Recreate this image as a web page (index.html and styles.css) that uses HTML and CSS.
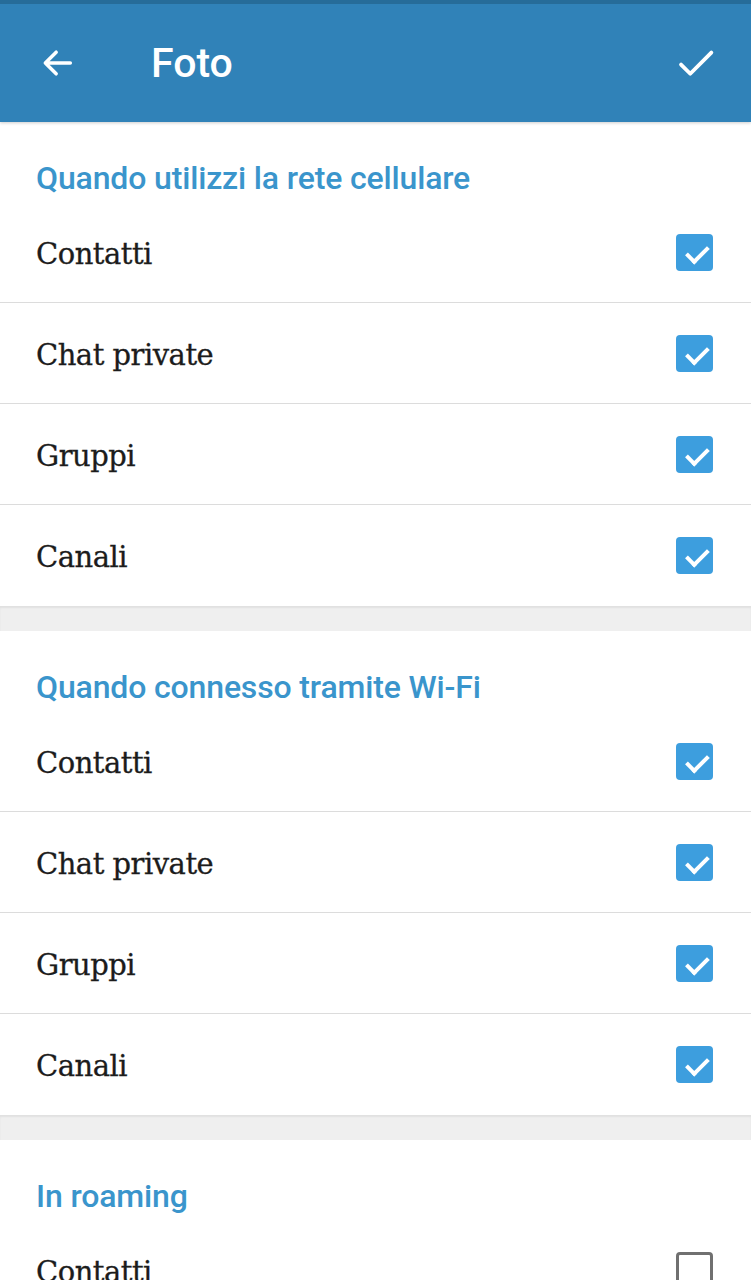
FILE: index.html
```html
<!DOCTYPE html>
<html lang="it">
<head>
  <meta charset="UTF-8" />
  <title>Foto</title>
  <meta name="viewport" content="width=device-width, initial-scale=1" />
  <link rel="stylesheet" href="styles.css">
</head>
<body>
  <header class="bar">
    <svg class="bar-icon" width="40" height="40" viewBox="0 0 24 24"><path d="M20 12H5M11.5 5.5L5 12l6.5 6.5" fill="none" stroke="#fff" stroke-width="2.1" stroke-linecap="round" stroke-linejoin="round"/></svg>
    <h1>Foto</h1>
    <svg class="bar-icon" width="46" height="46" viewBox="0 0 24 24"><path d="M4.2 12.8l4.8 4.8L20 6.6" fill="none" stroke="#fff" stroke-width="2" stroke-linecap="round" stroke-linejoin="round"/></svg>
  </header>

  <section class="group">
    <h2>Quando utilizzi la rete cellulare</h2>
    <div class="row"><span>Contatti</span><i class="box on"></i></div>
    <div class="row"><span>Chat private</span><i class="box on"></i></div>
    <div class="row"><span>Gruppi</span><i class="box on"></i></div>
    <div class="row"><span>Canali</span><i class="box on"></i></div>
  </section>
  <div class="gap"></div>
  <section class="group">
    <h2>Quando connesso tramite Wi-Fi</h2>
    <div class="row"><span>Contatti</span><i class="box on"></i></div>
    <div class="row"><span>Chat private</span><i class="box on"></i></div>
    <div class="row"><span>Gruppi</span><i class="box on"></i></div>
    <div class="row"><span>Canali</span><i class="box on"></i></div>
  </section>
  <div class="gap"></div>
  <section class="group">
    <h2>In roaming</h2>
    <div class="row"><span>Contatti</span><i class="box"></i></div>
  </section>
</body>
</html>
```

FILE: styles.css
```css
body { margin: 0; background: #fff; font-family: Roboto, "Noto Sans", sans-serif; overflow: hidden; }
.bar { height: 118px; background: #3082b8; border-top: 4px solid #266c99; display: flex; align-items: center; padding: 0 32px 0 37px; box-shadow: 0 1px 3px #0003; position: relative; z-index: 1; }
.bar h1 { flex: 1; margin: 0 0 0 74px; color: #fff; font-size: 41px; font-weight: 500; }
.bar-icon { display: block; }
.group { background: #fff; }
.group h2 { margin: 0; height: 80px; padding-left: 36px; box-sizing: border-box; padding-top: 38px; font-size: 32px; line-height: 36px; font-weight: 500; color: #3a95cc; letter-spacing: -0.15px; }
.row { height: 101px; display: flex; align-items: center; justify-content: space-between; padding: 3px 38px 0 36px; border-bottom: 1px solid #dcdcdc; box-sizing: border-box; }
.group .row:last-child { border-bottom: none; }
.row span { font-family: "DejaVu Serif", serif; font-size: 29px; color: #1c1c1c; letter-spacing: -0.5px; -webkit-text-stroke: 0.3px #1c1c1c; }
.box { display: block; width: 37px; height: 37px; margin-top: -3px; border-radius: 4px; box-sizing: border-box; border: 3px solid #707070; position: relative; }
.box.on { background: #3d9ede; border: none; }
.box.on::after { content: ""; position: absolute; left: 9px; top: 6px; width: 18px; height: 9px; border-left: 4px solid #fff; border-bottom: 4px solid #fff; transform: rotate(-45deg) translate(-3px, 5px); }
.gap { height: 25px; background: #efefef; box-shadow: inset 0 2px 2px #0000000f; }
```
